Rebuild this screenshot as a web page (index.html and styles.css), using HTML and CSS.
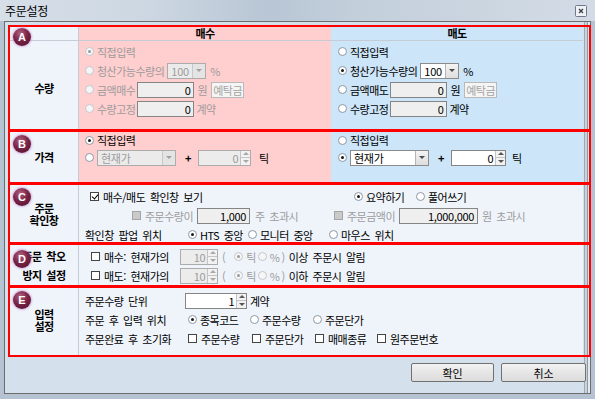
FILE: index.html
```html
<!DOCTYPE html>
<html lang="ko">
<head>
    <meta charset="UTF-8">
    <title>주문설정</title>
    <link rel="stylesheet" href="styles.css">
</head>
<body>
<div class="window">
    <div class="titlebar">
        <span class="title">주문설정</span>
        <span class="close-btn">
            <svg width="12" height="12" viewBox="0 0 12 12"><rect x="0.5" y="0.5" width="11" height="11" rx="1" fill="#eef1f5" stroke="#6f7987"/><path d="M4 4 L8 8 M8 4 L4 8" stroke="#3a3f46" stroke-width="1.3"/></svg>
        </span>
    </div>
    <div class="client">
        <div class="sections">
            <!-- A: 수량 -->
            <div class="section sec-a">
                <span class="badge">A</span>
                <div class="label label-a">
                    <div class="label-head"></div>
                    <div class="label-text">수량</div>
                </div>
                <div class="col buy">
                    <div class="col-head">매수</div>
                    <div class="col-rows">
                        <div class="row"><span class="radio dim on"></span><span class="dim">직접입력</span></div>
                        <div class="row"><span class="radio dim"></span><span class="dim">청산가능수량의</span><span class="combo dim combo-pct ml3"><span class="combo-text">100</span><span class="combo-btn"></span></span><span class="dim ml4">%</span></div>
                        <div class="row"><span class="radio dim"></span><span class="dim">금액매수</span><span class="field field-amt ml2">0</span><span class="dim ml3">원</span><span class="mini-btn ml4">예탁금</span></div>
                        <div class="row"><span class="radio dim"></span><span class="dim">수량고정</span><span class="field field-amt ml2">0</span><span class="dim ml2">계약</span></div>
                    </div>
                </div>
                <div class="col sell">
                    <div class="col-head">매도</div>
                    <div class="col-rows">
                        <div class="row"><span class="radio"></span><span>직접입력</span></div>
                        <div class="row"><span class="radio on"></span><span>청산가능수량의</span><span class="combo combo-pct ml3"><span class="combo-text">100</span><span class="combo-btn"></span></span><span class="ml4">%</span></div>
                        <div class="row"><span class="radio"></span><span>금액매도</span><span class="field field-amt ml2">0</span><span class="ml3">원</span><span class="mini-btn ml4">예탁금</span></div>
                        <div class="row"><span class="radio"></span><span>수량고정</span><span class="field field-amt ml2">0</span><span class="ml2">계약</span></div>
                    </div>
                </div>
            </div>

            <!-- B: 가격 -->
            <div class="section sec-b">
                <span class="badge">B</span>
                <div class="label">가격</div>
                <div class="col buy">
                    <div class="row row-short"><span class="radio on"></span><span>직접입력</span></div>
                    <div class="row"><span class="radio"></span><span class="combo dim combo-price"><span class="combo-text">현재가</span><span class="combo-btn"></span></span><span class="plus">+</span><span class="spin dim spin-tick"><span class="spin-text">0</span><span class="spin-btns"><span class="spin-up"></span><span class="spin-down"></span></span></span><span class="ml8">틱</span></div>
                </div>
                <div class="col sell">
                    <div class="row row-short"><span class="radio"></span><span>직접입력</span></div>
                    <div class="row"><span class="radio on"></span><span class="combo combo-price"><span class="combo-text">현재가</span><span class="combo-btn"></span></span><span class="plus">+</span><span class="spin spin-tick"><span class="spin-text">0</span><span class="spin-btns"><span class="spin-up"></span><span class="spin-down"></span></span></span><span class="ml6">틱</span></div>
                </div>
            </div>

            <!-- C: 주문 확인창 -->
            <div class="section sec-c">
                <span class="badge">C</span>
                <div class="label label-tight">주문<br>확인창</div>
                <div class="body">
                    <div class="row">
                        <div class="c-left c-in1"><span class="check on"></span><span>매수/매도 확인창 보기</span></div>
                        <div class="c-right c-in1r">
                            <span class="opt w62"><span class="radio on"></span><span>요약하기</span></span>
                            <span class="opt"><span class="radio"></span><span>풀어쓰기</span></span>
                        </div>
                    </div>
                    <div class="row">
                        <div class="c-left c-in2"><span class="check dim"></span><span class="dim">주문수량이</span><span class="field field-qty ml4">1,000</span><span class="dim ml5">주 초과시</span></div>
                        <div class="c-right c-in2r"><span class="check dim"></span><span class="dim">주문금액이</span><span class="field field-money ml4">1,000,000</span><span class="dim ml4">원 초과시</span></div>
                    </div>
                    <div class="row">
                        <span class="row-label">확인창 팝업 위치</span>
                        <span class="opt w60"><span class="radio on"></span><span>HTS 중앙</span></span>
                        <span class="opt w81"><span class="radio"></span><span>모니터 중앙</span></span>
                        <span class="opt"><span class="radio"></span><span>마우스 위치</span></span>
                    </div>
                </div>
            </div>

            <!-- D: 주문 착오 방지 설정 -->
            <div class="section sec-d">
                <span class="badge badge-d">D</span>
                <div class="label label-loose">주문 착오<br>방지 설정</div>
                <div class="body">
                    <div class="row row-warn"><span class="check"></span><span class="warn-text">매수: 현재가의</span><span class="spin dim spin-pct"><span class="spin-text">10</span><span class="spin-btns"><span class="spin-up"></span><span class="spin-down"></span></span></span><span class="dim ml4">(</span><span class="radio dim on ml9"></span><span class="dim">틱</span><span class="radio dim ml2"></span><span class="dim">%</span><span class="dim ml2">)</span><span class="ml4">이상 주문시 알림</span></div>
                    <div class="row row-warn"><span class="check"></span><span class="warn-text">매도: 현재가의</span><span class="spin dim spin-pct"><span class="spin-text">10</span><span class="spin-btns"><span class="spin-up"></span><span class="spin-down"></span></span></span><span class="dim ml4">(</span><span class="radio dim on ml9"></span><span class="dim">틱</span><span class="radio dim ml2"></span><span class="dim">%</span><span class="dim ml2">)</span><span class="ml4">이하 주문시 알림</span></div>
                </div>
            </div>

            <!-- E: 입력 설정 -->
            <div class="section sec-e">
                <span class="badge">E</span>
                <div class="label label-tight label-e">입력<br>설정</div>
                <div class="body">
                    <div class="row">
                        <span class="row-label row-label-unit">주문수량 단위</span>
                        <span class="spin spin-unit"><span class="spin-text">1</span><span class="spin-btns"><span class="spin-up"></span><span class="spin-down"></span></span></span>
                        <span class="ml3">계약</span>
                    </div>
                    <div class="row">
                        <span class="row-label">주문 후 입력 위치</span>
                        <span class="opt w62"><span class="radio on"></span><span>종목코드</span></span>
                        <span class="opt w63"><span class="radio"></span><span>주문수량</span></span>
                        <span class="opt"><span class="radio"></span><span>주문단가</span></span>
                    </div>
                    <div class="row">
                        <span class="row-label">주문완료 후 초기화</span>
                        <span class="opt w64"><span class="check"></span><span>주문수량</span></span>
                        <span class="opt w63"><span class="check"></span><span>주문단가</span></span>
                        <span class="opt w62"><span class="check"></span><span>매매종류</span></span>
                        <span class="opt"><span class="check"></span><span>원주문번호</span></span>
                    </div>
                </div>
            </div>
        </div>
        <div class="footer">
            <button class="btn btn-ok">확인</button>
            <button class="btn btn-cancel">취소</button>
        </div>
    </div>
</div>
</body>
</html>
```

FILE: styles.css
```css
* {
    box-sizing: border-box;
}
body {
    margin: 0;
    font-family: "Noto Sans CJK KR", "Noto Sans", sans-serif;
    font-size: 11px;
    line-height: 14px;
    letter-spacing: -0.5px;
    word-spacing: 2px;
    color: #000;
}
.window {
    width: 595px;
    height: 399px;
    background: #b4c2d1;
    display: flex;
    flex-direction: column;
    overflow: hidden;
}
.titlebar {
    height: 21px;
    flex: none;
    display: flex;
    align-items: center;
    padding: 0 5px;
    background: linear-gradient(90deg, #d6dfe8 0%, #cdd7e2 25%, #b8c6d5 45%, #c3cfdb 60%, #cbd5e0 80%, #d3dce6 100%);
}
.title {
    font-size: 12px;
    letter-spacing: -0.3px;
}
.close-btn {
    margin-left: auto;
    margin-right: 3px;
    display: flex;
}
.client {
    flex: 1;
    margin: 0 4px 5px;
    background: #d4e0eb;
    border: 1px solid #6d6d6d;
    box-shadow: inset -2px 0 #e4eaf0, inset -3px 0 #8e99a5, inset -5px 0 #c9d2db, inset -6px 0 #9ea9b5;
    display: flex;
    flex-direction: column;
}
.sections {
    margin: 3px 0 0 3px;
    width: 583px;
}
.section {
    position: relative;
    display: flex;
    border: 2px solid #ff0000;
    padding-right: 6px;
    margin-top: -1px;
}
.sec-a { height: 106px; margin-top: 0; }
.sec-b { height: 54px; }
.sec-c { height: 61px; }
.sec-d { height: 44px; }
.sec-e { height: 71px; }

.badge {
    position: absolute;
    left: 3px;
    top: 3px;
    width: 18px;
    height: 18px;
    border-radius: 50%;
    background: radial-gradient(circle at 40% 30%, #b3607f 0%, #7a2446 45%, #4d0f2a 100%);
    box-shadow: 0 0 2px 1px rgba(205, 150, 215, 0.7);
    color: #fff;
    font: bold 11px "Liberation Sans", sans-serif;
    letter-spacing: 0;
    display: flex;
    align-items: center;
    justify-content: center;
    z-index: 2;
}
.sec-a .badge { top: 1px; }
.badge-d { top: 5px; }

.label {
    width: 69px;
    flex: none;
    border-right: 1px solid #c5ccd6;
    background: #eff4fb;
    font-weight: bold;
    display: flex;
    flex-direction: column;
    align-items: center;
    justify-content: center;
    text-align: center;
}
.label-a {
    align-items: stretch;
    justify-content: flex-start;
}
.label-head {
    height: 14px;
    border-bottom: 1px solid #c5ccd6;
}
.label-text {
    flex: 1;
    display: flex;
    align-items: center;
    justify-content: center;
    padding-top: 6px;
}
.label-tight { line-height: 12px; padding-top: 1px; }
.label-e { padding-top: 0; padding-bottom: 4px; }
.label-loose { line-height: 19px; padding-top: 1px; }

.col {
    width: 252px;
    flex: none;
}
.buy { background: #ffcece; }
.sell { background: #cde5f8; }
.col-head {
    height: 14px;
    border-bottom: 1px solid #c5ccd6;
    text-align: center;
    font-weight: bold;
    line-height: 13px;
}
.col-rows { padding-top: 1px; }
.buy .row { padding-left: 6px; }
.sell .row { padding-left: 7px; }

.body {
    width: 504px;
    flex: none;
    background: #eff4fb;
    padding-top: 2px;
}
.sec-e .body { padding-top: 3px; }

.row {
    height: 19px;
    display: flex;
    align-items: center;
    white-space: nowrap;
}
.row-short { height: 16px; }
.row-label {
    width: 109px;
    padding-left: 6px;
    flex: none;
}
.row-label-unit { width: 106px; }
.row-warn { padding-left: 12px; }
.warn-text {
    width: 76px;
    flex: none;
}
.c-left {
    width: 252px;
    display: flex;
    align-items: center;
}
.c-right {
    display: flex;
    align-items: center;
}
.c-in1 { padding-left: 11px; }
.c-in1r { padding-left: 23px; }
.c-in2 { padding-left: 53px; }
.c-in2r { padding-left: 3px; }

.opt {
    display: flex;
    align-items: center;
    flex: none;
}
.w60 { width: 60px; }
.w62 { width: 62px; }
.w63 { width: 63px; }
.w64 { width: 64px; }
.w81 { width: 81px; }

.ml2 { margin-left: 2px; }
.ml3 { margin-left: 3px; }
.ml4 { margin-left: 4px; }
.ml5 { margin-left: 5px; }
.ml6 { margin-left: 6px; }
.ml8 { margin-left: 8px; }
.ml9 { margin-left: 9px; }

.dim { color: #9c9c9c; }

/* radio / check */
.radio {
    width: 9px;
    height: 9px;
    flex: none;
    border-radius: 50%;
    border: 1px solid #8c98a4;
    background: #fff;
    margin-right: 3px;
    position: relative;
}
.radio.on::after {
    content: "";
    position: absolute;
    left: 2px;
    top: 2px;
    width: 3px;
    height: 3px;
    border-radius: 50%;
    background: #1a1a1a;
}
.radio.dim {
    border-color: #c2c8ce;
    background: #f6f6f6;
}
.radio.dim.on::after { background: #9a9a9a; }

.check {
    width: 9px;
    height: 9px;
    flex: none;
    border: 1px solid #444;
    background: #fff;
    margin-right: 4px;
    position: relative;
}
.check.on::after {
    content: "";
    position: absolute;
    left: 2px;
    top: 0;
    width: 3px;
    height: 5px;
    border: solid #000;
    border-width: 0 1.5px 1.5px 0;
    transform: rotate(40deg);
}
.check.dim {
    border-color: #a5a5a5;
    background: #cacaca;
}

/* inputs */
.field {
    height: 16px;
    flex: none;
    border: 1px solid #858585;
    background: #efefef;
    text-align: right;
    padding-right: 3px;
    letter-spacing: -0.3px;
}
.field-amt { width: 57px; }
.field-qty { width: 53px; }
.field-money { width: 79px; }

.mini-btn {
    height: 16px;
    width: 33px;
    flex: none;
    border: 1px solid #b9b9b9;
    background: #f5f5f5;
    color: #a3a3a3;
    text-align: center;
}

.combo {
    height: 16px;
    flex: none;
    display: flex;
    border: 1px solid #8c8c8c;
    background: #fff;
}
.combo-text {
    flex: 1;
    padding-left: 3px;
    letter-spacing: -0.3px;
}
.combo-btn {
    width: 13px;
    border-left: 1px solid #b5b5b5;
    background: linear-gradient(#f3f3f3, #dedede);
    display: flex;
    align-items: center;
    justify-content: center;
}
.combo-btn::after {
    content: "";
    border-left: 3px solid transparent;
    border-right: 3px solid transparent;
    border-top: 3px solid #4a4a4a;
}
.combo.dim {
    background: #ebebeb;
    border-color: #acacac;
    color: #9c9c9c;
}
.combo.dim .combo-btn { background: #e4e4e4; border-left-color: #c8c8c8; }
.combo.dim .combo-btn::after { border-top-color: #a0a0a0; }
.combo-pct { width: 39px; }
.combo-price { width: 79px; }

.plus {
    margin-left: 9px;
    font-weight: bold;
}

.spin {
    height: 16px;
    flex: none;
    display: flex;
    border: 1px solid #858585;
    background: #fff;
}
.spin-text {
    flex: 1;
    text-align: right;
    padding-right: 2px;
}
.spin-btns {
    width: 10px;
    display: flex;
    flex-direction: column;
    border-left: 1px solid #c4c4c4;
    background: #f2f2f2;
}
.spin-btns span {
    flex: 1;
    display: flex;
    align-items: center;
    justify-content: center;
}
.spin-up::after {
    content: "";
    border-left: 3px solid transparent;
    border-right: 3px solid transparent;
    border-bottom: 3px solid #555;
}
.spin-down {
    border-top: 1px solid #c4c4c4;
}
.spin-down::after {
    content: "";
    border-left: 3px solid transparent;
    border-right: 3px solid transparent;
    border-top: 3px solid #555;
}
.spin.dim {
    background: #ececec;
    border-color: #acacac;
    color: #9c9c9c;
}
.spin.dim .spin-up::after { border-bottom-color: #a8a8a8; }
.spin.dim .spin-down::after { border-top-color: #a8a8a8; }
.spin-tick { width: 53px; margin-left: 7px; }
.sell .spin-tick { width: 55px; }
.spin-pct { width: 38px; }
.spin-unit { width: 62px; }

/* footer */
.footer {
    display: flex;
    justify-content: flex-end;
    gap: 7px;
    padding: 6px 4px 0 0;
}
.btn {
    height: 19px;
    border: 1px solid #707070;
    border-radius: 2px;
    background: linear-gradient(#f2f2f2, #e6e6e6 50%, #dcdcdc);
    font-family: "Noto Sans CJK KR", sans-serif;
    font-size: 11px;
    line-height: 14px;
    padding: 0;
    color: #000;
}
.btn-ok { width: 83px; }
.btn-cancel { width: 85px; }
```
